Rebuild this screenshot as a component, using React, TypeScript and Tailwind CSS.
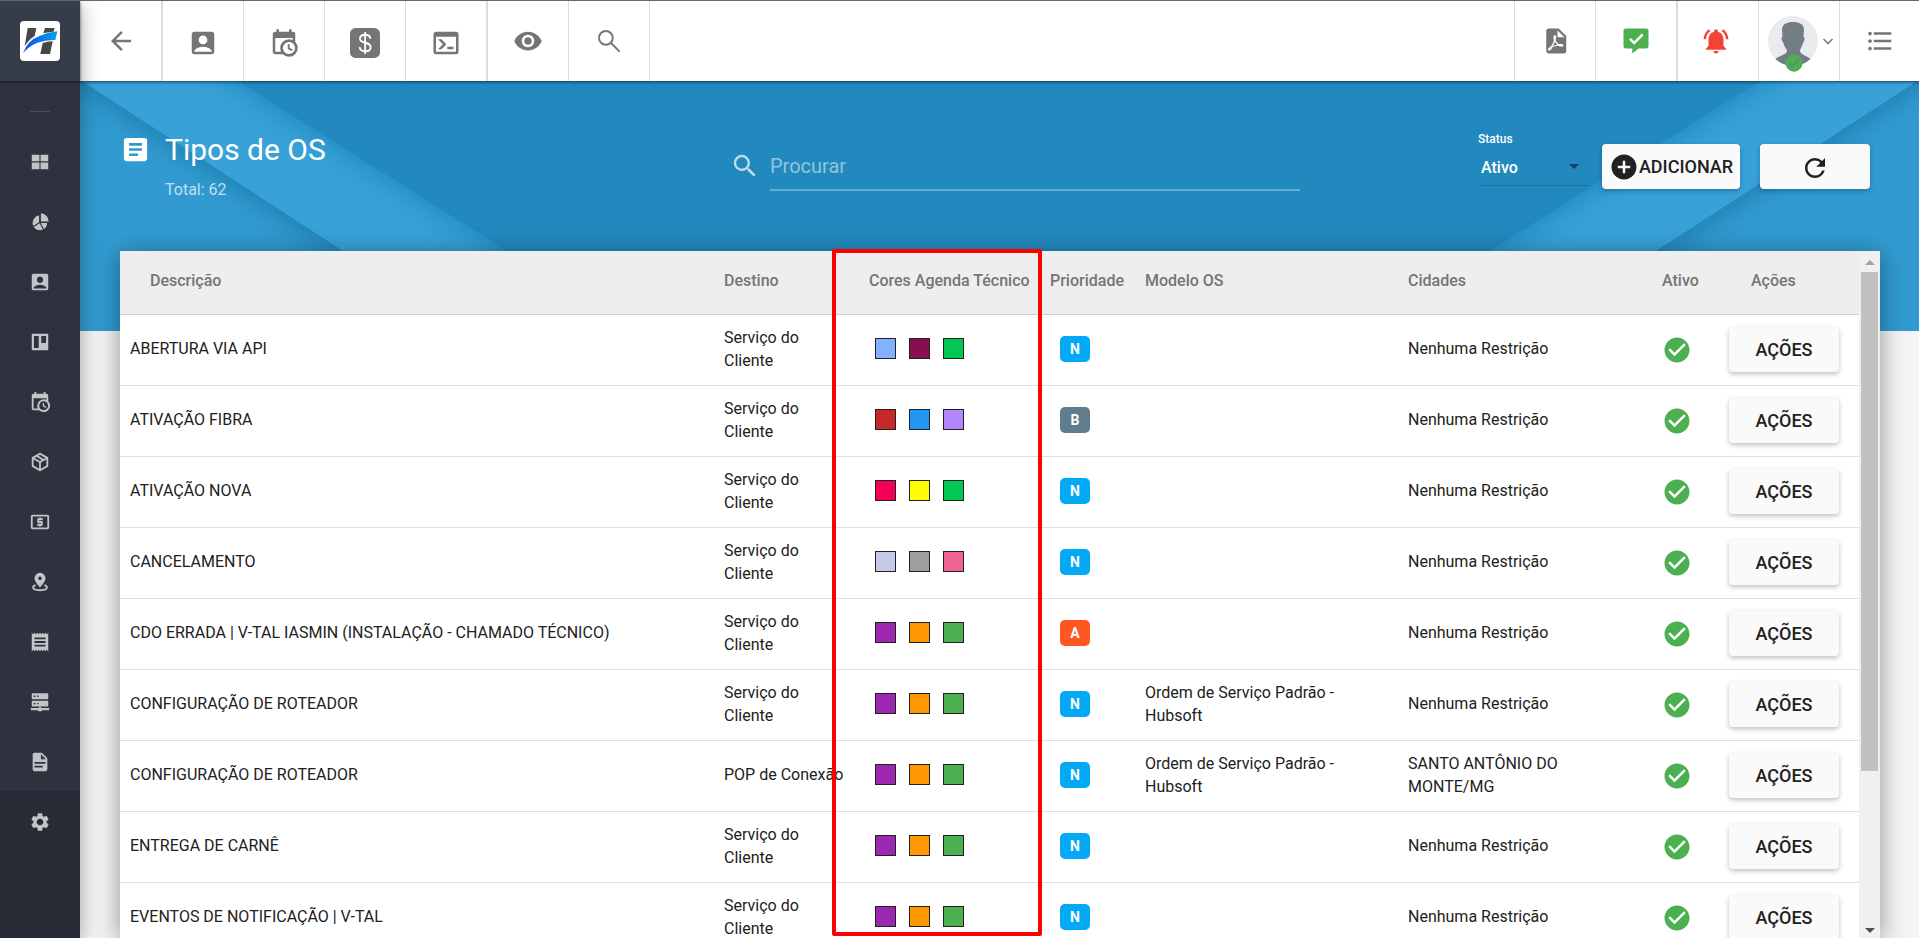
import { clsx } from 'clsx';
import type { ReactNode } from 'react';
import {
  MdAccountBox,
  MdAddCircle,
  MdArrowBack,
  MdArticle,
  MdCheckCircle,
  MdFormatListBulleted,
  MdNotificationsActive,
  MdReceipt,
  MdRefresh,
  MdSearch,
  MdSettings,
  MdVisibility,
} from 'react-icons/md';

type Priority = 'N' | 'B' | 'A';

interface ServiceOrderType {
  description: string;
  target: string;
  colors: string[];
  priority: Priority;
  model?: string;
  cities: string;
}

const DEFAULT_COLORS = ['#9c27b0', '#ff9800', '#4caf50'];
const CUSTOMER = 'Serviço do\nCliente';
const NO_RESTRICTION = 'Nenhuma Restrição';
const DEFAULT_MODEL = 'Ordem de Serviço Padrão - Hubsoft';

const rows: ServiceOrderType[] = [
  { description: 'ABERTURA VIA API', target: CUSTOMER, colors: ['#82b1ff', '#880e4f', '#00c853'], priority: 'N', cities: NO_RESTRICTION },
  { description: 'ATIVAÇÃO FIBRA', target: CUSTOMER, colors: ['#c62828', '#2196f3', '#b388ff'], priority: 'B', cities: NO_RESTRICTION },
  { description: 'ATIVAÇÃO NOVA', target: CUSTOMER, colors: ['#f50057', '#ffff00', '#00c853'], priority: 'N', cities: NO_RESTRICTION },
  { description: 'CANCELAMENTO', target: CUSTOMER, colors: ['#c5cae9', '#9e9e9e', '#f06292'], priority: 'N', cities: NO_RESTRICTION },
  { description: 'CDO ERRADA | V-TAL IASMIN (INSTALAÇÃO - CHAMADO TÉCNICO)', target: CUSTOMER, colors: DEFAULT_COLORS, priority: 'A', cities: NO_RESTRICTION },
  { description: 'CONFIGURAÇÃO DE ROTEADOR', target: CUSTOMER, colors: DEFAULT_COLORS, priority: 'N', model: DEFAULT_MODEL, cities: NO_RESTRICTION },
  { description: 'CONFIGURAÇÃO DE ROTEADOR', target: 'POP de Conexão', colors: DEFAULT_COLORS, priority: 'N', model: DEFAULT_MODEL, cities: 'SANTO ANTÔNIO DO MONTE/MG' },
  { description: 'ENTREGA DE CARNÊ', target: CUSTOMER, colors: DEFAULT_COLORS, priority: 'N', cities: NO_RESTRICTION },
  { description: 'EVENTOS DE NOTIFICAÇÃO | V-TAL', target: CUSTOMER, colors: DEFAULT_COLORS, priority: 'N', cities: NO_RESTRICTION },
];

const priorityColor: Record<Priority, string> = {
  N: 'bg-[#03a9f4]',
  B: 'bg-[#607d8b]',
  A: 'bg-[#ff5722]',
};

const Icon = ({ className, children }: { className?: string; children: ReactNode }) => (
  <svg viewBox="0 0 24 24" fill="currentColor" className={className} aria-hidden="true">
    {children}
  </svg>
);

interface IconProps {
  className?: string;
}

const CalendarClock = ({ className }: IconProps) => (
  <Icon className={className}>
    <path d="M15,13H16.5V15.82L18.94,17.23L18.19,18.53L15,16.69V13M19,8H5V19H9.67C9.24,18.09 9,17.07 9,16A7,7 0 0,1 16,9C17.07,9 18.09,9.24 19,9.67V8M5,21C3.89,21 3,20.1 3,19V5C3,3.89 3.89,3 5,3H6V1H8V3H16V1H18V3H19A2,2 0 0,1 21,5V11.1C22.24,12.36 23,14.09 23,16A7,7 0 0,1 16,23C14.09,23 12.36,22.24 11.1,21H5M16,11.15A4.85,4.85 0 0,0 11.15,16C11.15,18.68 13.32,20.85 16,20.85A4.85,4.85 0 0,0 20.85,16C20.85,13.32 18.68,11.15 16,11.15Z" />
  </Icon>
);

const DollarBox = ({ className }: IconProps) => (
  <Icon className={className}>
    <rect width="24" height="24" rx="4.5" />
    <path
      d="M16.3 8.6C16.2 6.7 14.6 5.4 12.1 5.4C9.7 5.4 8 6.7 8 8.6C8 10.6 9.7 11.2 12.1 11.8C14.7 12.4 16.5 13.2 16.5 15.3C16.5 17.3 14.7 18.6 12.2 18.6C9.5 18.6 7.8 17.3 7.7 15.2M12.1 3.2V20.8"
      fill="none"
      stroke="#fff"
      strokeWidth="1.5"
    />
  </Icon>
);

const ConsoleIcon = ({ className }: IconProps) => (
  <Icon className={className}>
    <path d="M20,19V7H4V19H20M20,3A2,2 0 0,1 22,5V19A2,2 0 0,1 20,21H4A2,2 0 0,1 2,19V5C2,3.89 2.9,3 4,3H20M13,17V15H18V17H13M9.58,13L5.57,9H8.4L11.7,12.3C12.09,12.69 12.09,13.33 11.7,13.72L8.42,17H5.59L9.58,13Z" />
  </Icon>
);

const FilePdf = ({ className }: IconProps) => (
  <Icon className={className}>
    <path d="M14,9H19.5L14,3.5V9M7,2H15L21,8V20A2,2 0 0,1 19,22H7C5.89,22 5,21.1 5,20V4A2,2 0 0,1 7,2M11.93,12.44C12.34,13.34 12.86,14.08 13.46,14.59L13.87,14.91C13,15.07 11.8,15.35 10.53,15.84V15.84L10.42,15.88L10.92,14.84C11.37,13.97 11.7,13.18 11.93,12.44M18.41,16.25C18.59,16.07 18.68,15.84 18.69,15.59C18.72,15.39 18.67,15.2 18.57,15.04C18.28,14.57 17.53,14.35 16.29,14.35L15,14.42L14.13,13.84C13.5,13.32 12.93,12.41 12.53,11.28L12.57,11.14C12.9,9.81 13.21,8.2 12.55,7.54C12.39,7.38 12.17,7.3 11.94,7.3H11.7C11.33,7.3 11,7.69 10.91,8.07C10.54,9.4 10.76,10.13 11.13,11.34V11.35C10.88,12.23 10.56,13.25 10.05,14.28L9.09,16.08L8.2,16.57C7,17.32 6.43,18.16 6.32,18.69C6.28,18.88 6.3,19.05 6.37,19.23L6.4,19.28L6.88,19.59L7.32,19.7C8.13,19.7 9.05,18.75 10.29,16.63L10.47,16.56C11.5,16.23 12.78,16 14.5,15.81C15.53,16.32 16.74,16.55 17.5,16.55C17.94,16.55 18.24,16.44 18.41,16.25Z" />
  </Icon>
);

const MessageCheck = ({ className }: IconProps) => (
  <Icon className={className}>
    <path d="M4 2H20A2 2 0 0 1 22 4V16A2 2 0 0 1 20 18H14L9 22V18H4A2 2 0 0 1 2 16V4A2 2 0 0 1 4 2M10.5 15L18 7.5L16.6 6L10.5 12.1L7.9 9.5L6.5 11Z" />
  </Icon>
);

const Dashboard = ({ className }: IconProps) => (
  <Icon className={className}>
    <path d="M3 4H11.4V11.3H3ZM12.6 4H21V11.3H12.6ZM3 12.5H11.4V20H3ZM12.6 12.5H21V20H12.6Z" />
  </Icon>
);

const ChartPie = ({ className }: IconProps) => (
  <Icon className={className}>
    <path d="M13 2.5A9 9 0 0 1 21.5 11.5H13ZM11 4.5V12.2L4.6 16.4A8.7 8.7 0 0 1 11 4.5M5.2 17.4L11.6 13.3L15.2 20.3A8.7 8.7 0 0 1 5.2 17.4M12.8 13H19.8A8.7 8.7 0 0 1 16.2 19.7Z" />
  </Icon>
);

const Trello = ({ className }: IconProps) => (
  <Icon className={className}>
    <path fillRule="evenodd" d="M4 3H20A1 1 0 0 1 21 4V20A1 1 0 0 1 20 21H4A1 1 0 0 1 3 20V4A1 1 0 0 1 4 3M5.4 5.4V18.6H10.6V5.4ZM13.4 5.4V13H18.6V5.4Z" />
  </Icon>
);

const Package = ({ className }: IconProps) => (
  <Icon className={className}>
    <path d="M21,16.5C21,16.88 20.79,17.21 20.47,17.38L12.57,21.82C12.41,21.94 12.21,22 12,22C11.79,22 11.59,21.94 11.43,21.82L3.53,17.38C3.21,17.21 3,16.88 3,16.5V7.5C3,7.12 3.21,6.79 3.53,6.62L11.43,2.18C11.59,2.06 11.79,2 12,2C12.21,2 12.41,2.06 12.57,2.18L20.47,6.62C20.79,6.79 21,7.12 21,7.5V16.5M12,4.15L10.11,5.22L16,8.61L17.96,7.5L12,4.15M6.04,7.5L12,10.85L13.96,9.75L8.08,6.35L6.04,7.5M5,15.91L11,19.29V12.58L5,9.21V15.91M19,15.91V9.21L13,12.58V19.29L19,15.91Z" />
  </Icon>
);

const Cash = ({ className }: IconProps) => (
  <Icon className={className}>
    <path d="M20,18H4V6H20M20,4H4C2.89,4 2,4.89 2,6V18A2,2 0 0,0 4,20H20A2,2 0 0,0 22,18V6C22,4.89 21.1,4 20,4M11,17H13V16H14A1,1 0 0,0 15,15V12A1,1 0 0,0 14,11H11V10H15V8H13V7H11V8H10A1,1 0 0,0 9,9V12A1,1 0 0,0 10,13H13V14H9V16H11V17Z" />
  </Icon>
);

const MapPin = ({ className }: IconProps) => (
  <Icon className={className}>
    <path fillRule="evenodd" d="M12 2A6 6 0 0 1 18 8C18 12 12 18 12 18S6 12 6 8A6 6 0 0 1 12 2M12 6A2 2 0 1 0 12 10A2 2 0 1 0 12 6" />
    <path d="M7.2 15.3C5 15.9 4.5 16.7 4.5 17.8C4.5 19.8 7.8 21 12 21S19.5 19.8 19.5 17.8C19.5 16.7 19 15.9 16.8 15.3" fill="none" stroke="currentColor" strokeWidth="2" />
  </Icon>
);

const Server = ({ className }: IconProps) => (
  <Icon className={className}>
    <path fillRule="evenodd" d="M4 2.5H20A1 1 0 0 1 21 3.5V8A1 1 0 0 1 20 9H4A1 1 0 0 1 3 8V3.5A1 1 0 0 1 4 2.5M5 5V6.5H7V5ZM9 5V6.5H10.5V5ZM4 10.5H20A1 1 0 0 1 21 11.5V16A1 1 0 0 1 20 17H4A1 1 0 0 1 3 16V11.5A1 1 0 0 1 4 10.5M5 13V14.5H7V13ZM9 13V14.5H10.5V13Z" />
    <path d="M11 17H13V18.5H22V21H14V22H10V21H2V18.5H11Z" />
  </Icon>
);

const FileDocument = ({ className }: IconProps) => (
  <Icon className={className}>
    <path d="M13,9H18.5L13,3.5V9M6,2H14L20,8V20A2,2 0 0,1 18,22H6C4.89,22 4,21.1 4,20V4C4,2.89 4.89,2 6,2M15,18V16H6V18H15M18,14V12H6V14H18Z" />
  </Icon>
);

const Logo = () => (
  <svg viewBox="0 0 120 120" className="size-10" role="img" aria-label="Hubsoft">
    <defs>
      <linearGradient id="swoosh" x1="0" x2="1">
        <stop offset="0" stopColor="#0b4df0" />
        <stop offset="1" stopColor="#0aa0e6" />
      </linearGradient>
    </defs>
    <rect width="120" height="120" rx="12" fill="#fff" />
    <path d="M23 21H49L44 45Q28 54 14 76ZM75 21H104L101 32Q86 33 70 37ZM68 66Q82 62 98 61L90 99H61Z" fill="#474747" />
    <path d="M9 97Q22 58 60 44Q84 34 112 31L106 57Q80 56 52 65Q26 75 9 97Z" fill="url(#swoosh)" />
  </svg>
);

const menu: Array<{ label: string; icon: React.ComponentType<IconProps> }> = [
  { label: 'Dashboard', icon: Dashboard },
  { label: 'Relatórios', icon: ChartPie },
  { label: 'Clientes', icon: MdAccountBox },
  { label: 'Quadros', icon: Trello },
  { label: 'Agenda', icon: CalendarClock },
  { label: 'Estoque', icon: Package },
  { label: 'Financeiro', icon: Cash },
  { label: 'Mapas', icon: MapPin },
  { label: 'Fiscal', icon: MdReceipt },
  { label: 'Rede', icon: Server },
  { label: 'Documentos', icon: FileDocument },
];

const Sidebar = () => (
  <aside className="relative z-20 flex w-20 shrink-0 flex-col bg-[#2d323e] shadow-[0_4px_20px_rgba(0,0,0,0.35)]">
    <div className="relative z-10 flex h-20 shrink-0 items-center justify-center bg-[#373c49] shadow-[0_1px_3px_rgba(0,0,0,0.6)]">
      <Logo />
    </div>
    <nav className="flex flex-1 flex-col text-[#c3c4c7]">
      <div className="mx-auto my-[30px] h-px w-5 shrink-0 bg-[#484d57]" />
      <div className="flex flex-col">
        {menu.map((item) => (
          <a key={item.label} href="#" aria-label={item.label} className="flex h-15 items-center justify-center pb-5">
            <item.icon className="size-[22px]" />
          </a>
        ))}
      </div>
      <div className="-mt-[11px] flex-1 bg-[#272b35]">
        <a href="#" aria-label="Configurações" className="flex h-[62px] items-center justify-center">
          <MdSettings className="size-[22px]" />
        </a>
      </div>
    </nav>
  </aside>
);

const TopButton = ({ label, className, children }: { label: string; className?: string; children: ReactNode }) => (
  <button type="button" aria-label={label} className={clsx('flex h-20 items-center justify-center border-[#dcdcdc]', className)}>
    {children}
  </button>
);

const Avatar = () => (
  <span className="relative block size-[50px]">
    <svg viewBox="0 0 50 50" className="size-full" aria-hidden="true">
      <defs>
        <clipPath id="face">
          <circle cx="25" cy="25" r="25" />
        </clipPath>
      </defs>
      <g clipPath="url(#face)">
        <rect width="50" height="50" fill="#e9ebee" />
        <path
          d="M14 14C14 8 19 6 25 6S36 8 36 14L35.5 21C37 21 37 24 35 27C34 31 32 33 32 35C32 39 41 40 45 45V50H5V45C9 40 19 39 19 35C19 33 16 31 15.5 27C13 24 13 21 14.5 21Z"
          fill="#747c84"
        />
      </g>
    </svg>
    <svg viewBox="0 0 24 24" className="absolute bottom-[-6px] left-[17px] size-[18px]" aria-hidden="true">
      <circle cx="12" cy="12" r="11.5" fill="#4caf50" />
      <path d="M6 12.5L10 16.5L18.5 7" fill="none" stroke="#747c84" strokeWidth="2" />
    </svg>
  </span>
);

const TopBar = () => (
  <header className="relative z-10 flex h-20 shrink-0 items-center justify-between bg-white text-[#757575] shadow-[0_1px_3px_rgba(0,0,0,0.6)]">
    <div className="flex">
      <TopButton label="Voltar" className="w-[83px] border-r-2">
        <MdArrowBack className="size-[30px]" />
      </TopButton>
      <TopButton label="Clientes" className="w-[81px] border-r pt-1">
        <MdAccountBox className="size-[30px]" />
      </TopButton>
      <TopButton label="Agenda" className="w-[81px] border-r pt-1">
        <CalendarClock className="size-[30px]" />
      </TopButton>
      <TopButton label="Financeiro" className="w-[81px] border-r pt-1">
        <DollarBox className="size-[30px]" />
      </TopButton>
      <TopButton label="Terminal" className="w-[82px] border-r-2 pt-1">
        <ConsoleIcon className="size-[30px]" />
      </TopButton>
      <TopButton label="Visualizar" className="w-[81px] border-r">
        <MdVisibility className="size-[30px]" />
      </TopButton>
      <TopButton label="Buscar" className="w-[81px] border-r">
        <Icon className="size-[30px]">
          <path d="M15 9.5A5.5 5.5 0 1 0 4 9.5A5.5 5.5 0 1 0 15 9.5M13.6 13.6L20.5 20.5" fill="none" stroke="currentColor" strokeWidth="1.5" />
        </Icon>
      </TopButton>
    </div>
    <div className="flex">
      <TopButton label="Exportar PDF" className="w-[81px] border-l">
        <FilePdf className="size-[30px]" />
      </TopButton>
      <TopButton label="Mensagens" className="w-[81px] border-l text-[#4caf50]">
        <MessageCheck className="size-[30px]" />
      </TopButton>
      <TopButton label="Notificações" className="w-[82px] border-l-2 pr-1 text-[#f44336]">
        <MdNotificationsActive className="size-[30px]" />
      </TopButton>
      <TopButton label="Perfil" className="w-[81px] gap-1 border-l pl-1">
        <Avatar />
        <svg viewBox="0 0 12 8" className="h-2 w-3 shrink-0" aria-hidden="true">
          <path d="M1.5 2L6 6.5L10.5 2" fill="none" stroke="currentColor" strokeWidth="1.5" />
        </svg>
      </TopButton>
      <TopButton label="Menu" className="w-20 border-l">
        <MdFormatListBulleted className="size-[30px]" />
      </TopButton>
    </div>
  </header>
);

const Banner = () => (
  <svg viewBox="0 0 1839 250" preserveAspectRatio="none" className="absolute inset-x-0 top-0 h-[250px] w-full" aria-hidden="true">
    <defs>
      <filter id="fold" x="-10%" y="-20%" width="120%" height="140%">
        <feDropShadow dx="0" dy="6" stdDeviation="14" floodColor="#04507c" floodOpacity="0.4" />
      </filter>
      <filter id="softFold" x="-10%" y="-20%" width="120%" height="140%">
        <feDropShadow dx="0" dy="6" stdDeviation="14" floodColor="#0f6ea6" floodOpacity="0.45" />
      </filter>
    </defs>
    <rect width="1839" height="250" fill="#319bd1" />
    <path d="M-121 -80L386 250L509 330H1330L1453 250L1960 -80Z" fill="#38a2d8" filter="url(#fold)" />
    <path d="M32 -80L158 0L553 250L679 330H1156L1282 250L1680 0L1806 -80Z" fill="#2089bf" filter="url(#softFold)" />
  </svg>
);

const RAISED = 'shadow-[0_2px_5px_rgba(0,0,0,0.26)]';

const PageHeader = () => (
  <div className="flex h-[170px] shrink-0 items-center">
    <div className="flex flex-[610] items-start text-white">
      <MdArticle className="mt-1 size-[31px]" />
      <div className="ml-3.5">
        <h1 className="text-[30px] leading-10">Tipos de OS</h1>
        <p className="mt-2 text-base text-white/70">Total: 62</p>
      </div>
    </div>
    <div className="mr-[178px] flex flex-[570] items-center text-white/70">
      <MdSearch className="mr-2.5 size-[30px] shrink-0" />
      <input
        type="search"
        aria-label="Procurar"
        placeholder="Procurar"
        className="mt-1 h-[46px] min-w-0 flex-1 border-b-2 border-white/30 bg-transparent pb-0.5 text-xl text-white outline-none placeholder:text-white/50"
      />
    </div>
    <div className="flex items-center pr-2.5">
      <div className="relative mr-3 mb-4 w-[112px] text-white">
        <label htmlFor="status" className="block text-xs leading-4 font-medium">
          Status
        </label>
        <select id="status" className="mt-1 h-[35px] w-full appearance-none border-b border-black/15 bg-transparent pl-[3px] text-base font-medium outline-none">
          <option>Ativo</option>
        </select>
        <svg viewBox="0 0 10 5" className="pointer-events-none absolute right-[11px] bottom-[17px] h-[5px] w-2.5" aria-hidden="true">
          <path d="M0 0H10L5 5Z" fill="#10405a" />
        </svg>
      </div>
      <button type="button" className={`mr-5 flex h-[45px] w-[138px] items-center justify-center rounded-[4px] bg-[#fafafa] pt-0.5 text-[#212121] ${RAISED}`}>
        <MdAddCircle className="size-[30px] shrink-0" />
        <span className="text-lg font-medium">ADICIONAR</span>
      </button>
      <button type="button" aria-label="Atualizar" className={`flex h-[45px] w-[110px] items-center justify-center rounded-[4px] bg-[#fafafa] pt-1 text-[#212121] ${RAISED}`}>
        <MdRefresh className="size-[30px]" />
      </button>
    </div>
  </div>
);

const TypesTable = () => (
  <table className="w-full table-fixed border-collapse text-left text-[#212121]">
    <colgroup>
      <col />
      <col className="w-[145px]" />
      <col className="w-[181px]" />
      <col className="w-[95px]" />
      <col className="w-[263px]" />
      <col className="w-[254px]" />
      <col className="w-[67px]" />
      <col className="w-[140px]" />
    </colgroup>
    <thead>
      <tr className="h-[63px] border-b border-[#cfcfcf] bg-[#eee] whitespace-nowrap text-[#757575]">
        <th className="pb-0.5 pl-[30px] font-medium">Descrição</th>
        <th className="pb-0.5 pl-2.5 font-medium">Destino</th>
        <th className="pb-0.5 pl-2.5 font-medium">Cores Agenda Técnico</th>
        <th className="pb-0.5 pl-2.5 font-medium">Prioridade</th>
        <th className="pb-0.5 pl-2.5 font-medium">Modelo OS</th>
        <th className="pb-0.5 pl-2.5 font-medium">Cidades</th>
        <th className="pb-0.5 pl-2.5 font-medium">Ativo</th>
        <th className="pb-0.5 pl-8 font-medium">Ações</th>
      </tr>
    </thead>
    <tbody>
      {rows.map((row, i) => (
        <tr key={i} className="h-[71px] border-b border-[#e0e0e0] leading-[23px]">
          <td className="pb-0.5 pl-2.5">{row.description}</td>
          <td className="pb-0.5 pl-2.5 whitespace-pre">{row.target}</td>
          <td className="pb-0.5 pl-4">
            <div className="flex gap-[13px]">
              {row.colors.map((color) => (
                <span key={color} className="size-[21px] border border-[#212121]" style={{ backgroundColor: color }} />
              ))}
            </div>
          </td>
          <td className="pb-0.5 pl-5">
            <span className={clsx('flex h-[26px] w-[30px] items-center justify-center rounded-[5px] text-sm font-bold text-white', priorityColor[row.priority])}>
              {row.priority}
            </span>
          </td>
          <td className="pr-10 pb-0.5 pl-2.5">{row.model}</td>
          <td className="pr-10 pb-0.5 pl-2.5">{row.cities}</td>
          <td className="pl-2.5">
            <MdCheckCircle title="Ativo" className="size-[30px] text-[#4caf50]" />
          </td>
          <td className="pl-2.5">
            <button type="button" className={`h-[45px] w-[110px] rounded-[4px] bg-[#fafafa] text-lg font-medium ${RAISED}`}>
              AÇÕES
            </button>
          </td>
        </tr>
      ))}
    </tbody>
  </table>
);

const Scrollbar = () => (
  <div className="flex w-[21px] shrink-0 flex-col items-center bg-[#f0f0f0]" aria-hidden="true">
    <svg viewBox="0 0 10 5" className="mt-[9px] mb-[7px] h-[5px] w-2.5 shrink-0">
      <path d="M0 5H10L5 0Z" fill="#a3a3a3" />
    </svg>
    <div className="w-[17px] flex-[498] bg-[#c1c1c1]" />
    <div className="flex-[157]" />
    <svg viewBox="0 0 10 5" className="mb-[5px] h-[5px] w-2.5 shrink-0">
      <path d="M0 0H10L5 5Z" fill="#505050" />
    </svg>
  </div>
);

const App = () => {
  return (
    <div className="flex h-screen overflow-hidden border-t border-[#666] bg-[#f4f4f4] font-['Roboto',sans-serif] text-base">
      <Sidebar />
      <div className="flex min-w-0 flex-1 flex-col">
        <TopBar />
        <main className="relative flex min-h-0 flex-1 flex-col">
          <Banner />
          <div className="relative flex min-h-0 flex-1 flex-col pr-[39px] pl-10">
            <PageHeader />
            <div className="relative flex min-h-0 flex-1 bg-white shadow-[0_4px_24px_rgba(0,0,0,0.4)]">
              <div className="min-w-0 flex-1 overflow-hidden">
                <TypesTable />
              </div>
              <Scrollbar />
              {/* highlight around the calendar colours column */}
              <div className="pointer-events-none absolute -top-0.5 right-[838px] bottom-0.5 w-[210px] rounded-[2px] border-4 border-[#ff0000]" />
            </div>
          </div>
        </main>
      </div>
    </div>
  );
};

export default App;
